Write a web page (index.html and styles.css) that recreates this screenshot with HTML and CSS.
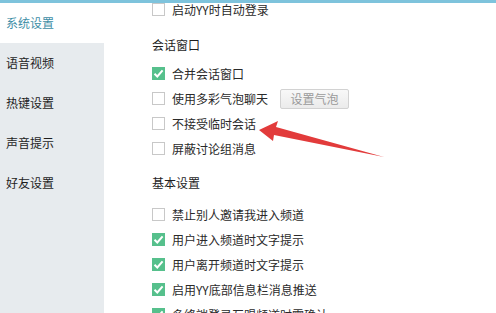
FILE: index.html
```html
<!DOCTYPE html>
<html lang="zh">
<head>
<meta charset="utf-8">
<link rel="stylesheet" href="styles.css">
</head>
<body>
<div class="topbar"></div>
<div class="main">
  <nav class="sidebar">
    <div class="nav-item active">系统设置</div>
    <div class="nav-item">语音视频</div>
    <div class="nav-item">热键设置</div>
    <div class="nav-item">声音提示</div>
    <div class="nav-item">好友设置</div>
    <div class="nav-rest"></div>
  </nav>
  <section class="content">
    <div class="row first"><span class="cb"></span><span>启动YY时自动登录</span></div>

    <div class="heading h1">会话窗口</div>
    <div class="row g1"><span class="cb on"><svg viewBox="0 0 13 13"><path d="M2.5 6.8 L5.3 9.5 L10.6 3.4" /></svg></span><span>合并会话窗口</span></div>
    <div class="row"><span class="cb"></span><span>使用多彩气泡聊天</span><button class="btn">设置气泡</button></div>
    <div class="row"><span class="cb"></span><span>不接受临时会话</span></div>
    <div class="row"><span class="cb"></span><span>屏蔽讨论组消息</span></div>

    <div class="heading h2">基本设置</div>
    <div class="row g2"><span class="cb"></span><span>禁止别人邀请我进入频道</span></div>
    <div class="row"><span class="cb on"><svg viewBox="0 0 13 13"><path d="M2.5 6.8 L5.3 9.5 L10.6 3.4" /></svg></span><span>用户进入频道时文字提示</span></div>
    <div class="row"><span class="cb on"><svg viewBox="0 0 13 13"><path d="M2.5 6.8 L5.3 9.5 L10.6 3.4" /></svg></span><span>用户离开频道时文字提示</span></div>
    <div class="row"><span class="cb on"><svg viewBox="0 0 13 13"><path d="M2.5 6.8 L5.3 9.5 L10.6 3.4" /></svg></span><span>启用YY底部信息栏消息推送</span></div>
    <div class="row"><span class="cb on"><svg viewBox="0 0 13 13"><path d="M2.5 6.8 L5.3 9.5 L10.6 3.4" /></svg></span><span>多终端登录互踢频道时需确认</span></div>
  </section>
</div>
<svg class="arrow" width="496" height="313" viewBox="0 0 496 313">
  <polygon points="259,130 278,121 276,127 384,157 274,135 273,141" />
</svg>
</body>
</html>
```

FILE: styles.css
```css
html, body {
  margin: 0;
  padding: 0;
  width: 496px;
  height: 313px;
  overflow: hidden;
  background: #fff;
  font-family: "Noto Sans CJK SC", "Liberation Sans", sans-serif;
  font-size: 12px;
  color: #2a2a2a;
}

.topbar {
  height: 3px;
  background: #7ec3dc;
}

.main {
  display: flex;
  height: 310px;
}

.sidebar {
  width: 104px;
  flex: none;
  display: flex;
  flex-direction: column;
  background: #e7ebee;
}

.nav-item {
  height: 40px;
  line-height: 40px;
  padding-left: 6px;
  color: #1e1e1e;
}

.nav-item.active {
  background: #fff;
  color: #3e8ea6;
}

.nav-rest {
  flex: 1;
}

.content {
  flex: 1;
  padding-left: 48px;
  display: flex;
  flex-direction: column;
}

.row {
  height: 25px;
  display: flex;
  align-items: center;
  flex: none;
}

.row.first {
  margin-top: -6px;
}

.heading {
  height: 25px;
  line-height: 25px;
  flex: none;
  color: #1e1e1e;
}

.h1 { margin-top: 10px; }
.g1 { margin-top: 4px; }
.h2 { margin-top: 9px; }
.g2 { margin-top: 7px; }

.cb {
  width: 13px;
  height: 13px;
  box-sizing: border-box;
  border: 1px solid #c8c8c8;
  background: #fff;
  margin-right: 7px;
  flex: none;
  display: flex;
}

.cb.on {
  background: #56c08c;
  border-color: #56c08c;
}

.cb svg {
  width: 13px;
  height: 13px;
  margin: -1px;
}

.cb svg path {
  fill: none;
  stroke: #fff;
  stroke-width: 2;
}

.btn {
  margin-left: 12px;
  width: 69px;
  height: 20px;
  padding: 0;
  border: 1px solid #d2d2d2;
  border-radius: 2px;
  background: linear-gradient(#f8f8f8, #ebebeb);
  color: #9a9a9a;
  font-family: inherit;
  font-size: 12px;
  line-height: 18px;
}

.arrow {
  position: absolute;
  left: 0;
  top: 0;
  pointer-events: none;
}

.arrow polygon {
  fill: #e23b3b;
}
```
